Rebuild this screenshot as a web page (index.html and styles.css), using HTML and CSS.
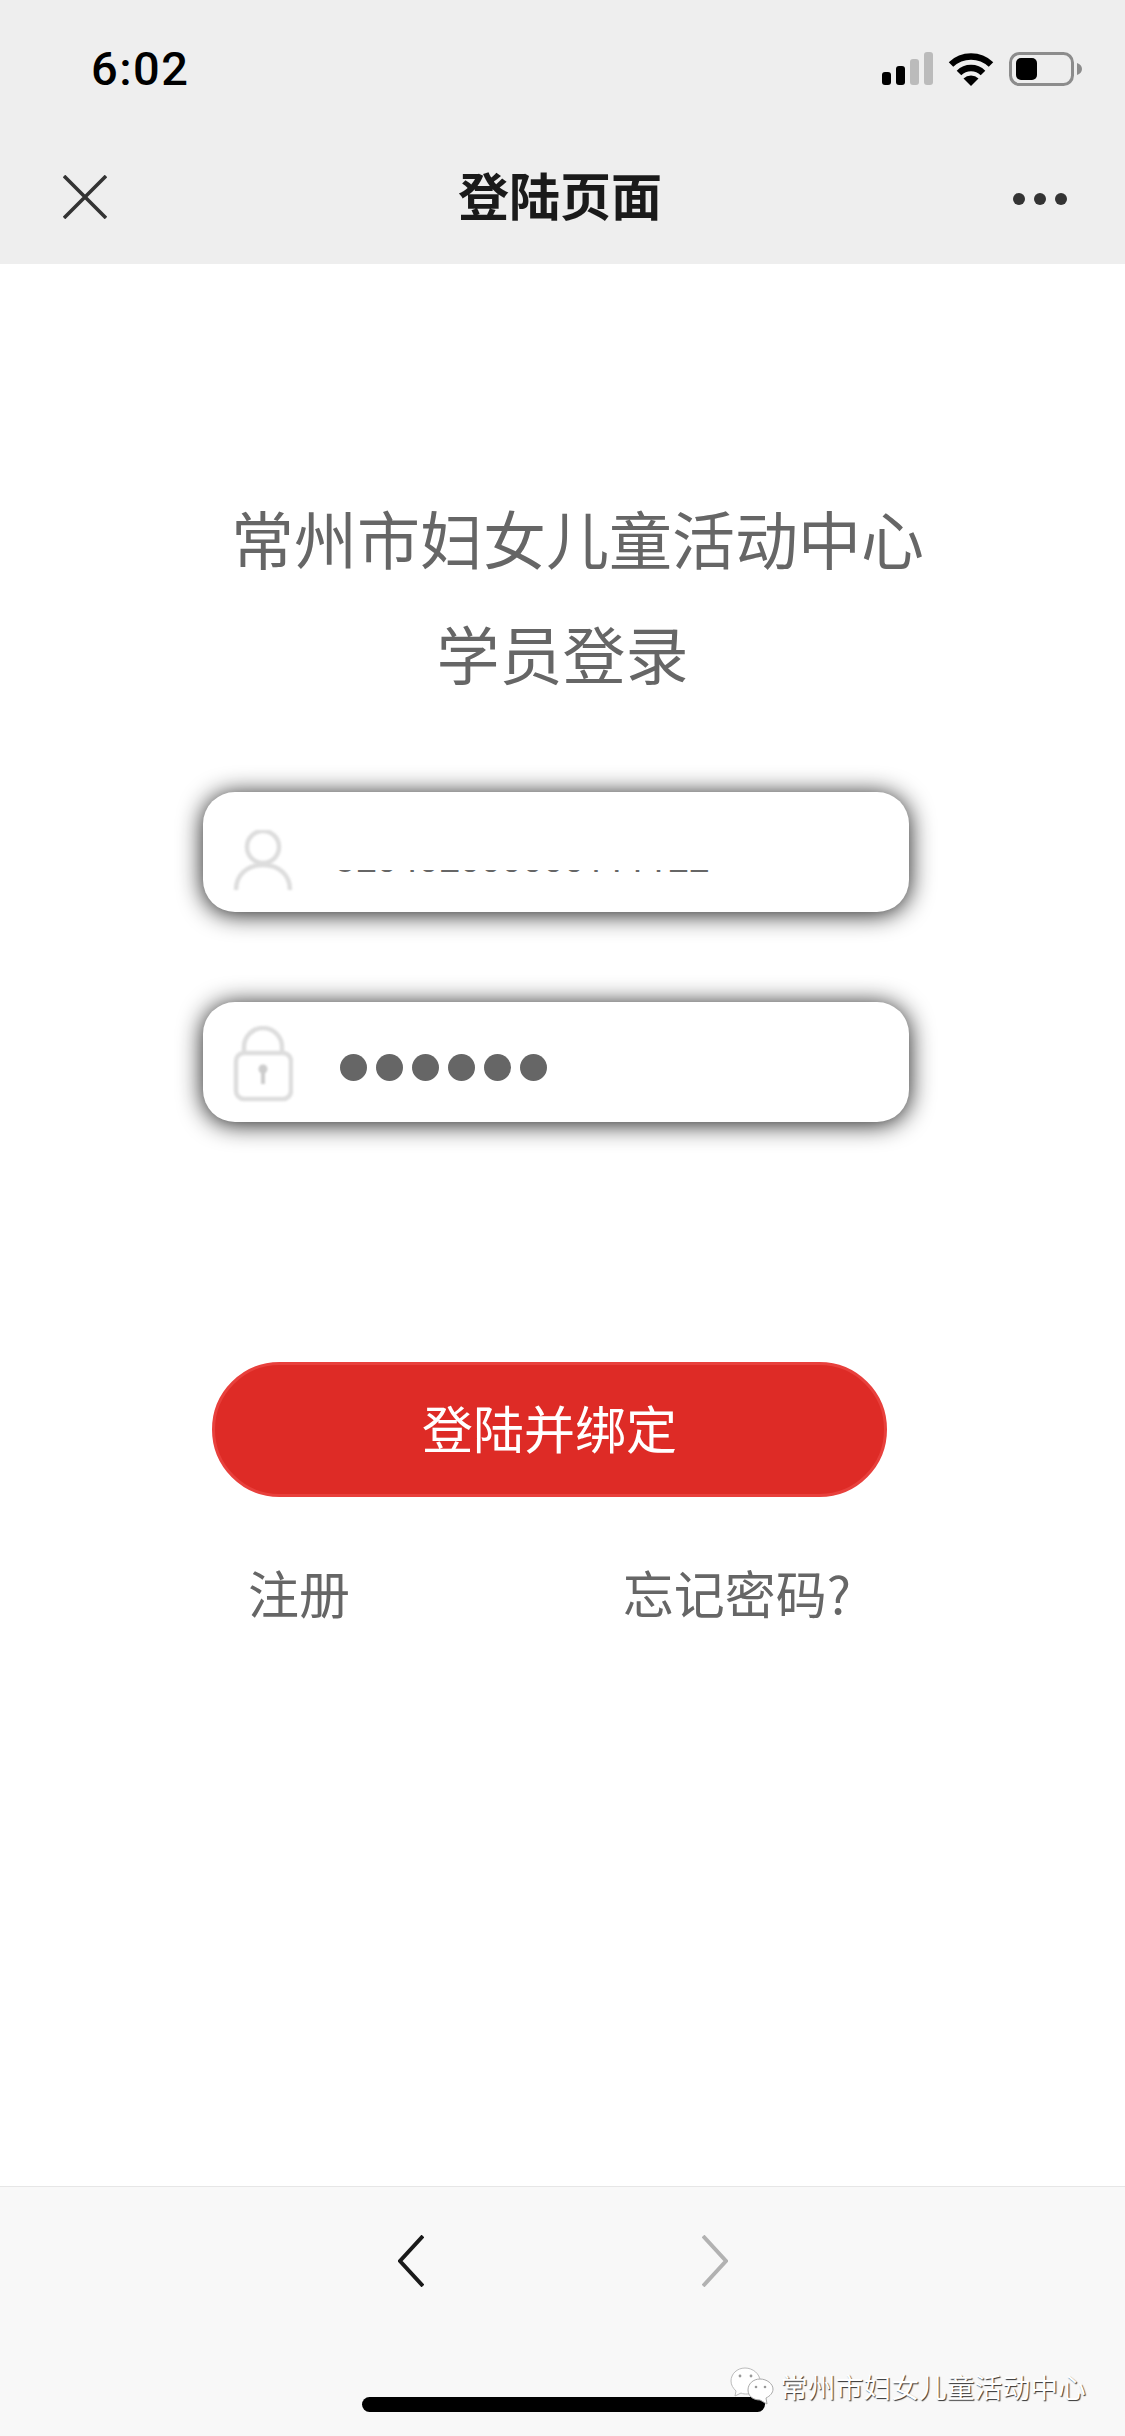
FILE: index.html
```html
<!DOCTYPE html>
<html lang="zh-CN">
<head>
<meta charset="utf-8"/>
<title>登陆页面</title>
<link rel="stylesheet" href="styles.css">
</head>
<body>
<div class="screen">
  <header class="top">
    <div class="status">
      <span class="time">6:02</span>
      <div class="status-icons">
        <svg class="signal" width="51" height="33" viewBox="0 0 51 33">
          <rect x="0" y="20" width="9" height="13" rx="3" fill="#000"/>
          <rect x="14" y="14" width="9" height="19" rx="3" fill="#000"/>
          <rect x="28" y="7" width="9" height="26" rx="3" fill="#bbb"/>
          <rect x="42" y="0" width="9" height="33" rx="3" fill="#bbb"/>
        </svg>
        <svg class="wifi" width="46" height="34" viewBox="0 0 46 34">
          <path d="M3 12.5 A29 29 0 0 1 43 12.5" fill="none" stroke="#000" stroke-width="6.5"/>
          <path d="M11 21 A17 17 0 0 1 35 21" fill="none" stroke="#000" stroke-width="6.5"/>
          <path d="M15.5 26.5 A11 11 0 0 1 30.5 26.5 L23 34 Z" fill="#000"/>
        </svg>
        <svg class="battery" width="73" height="34" viewBox="0 0 73 34">
          <rect x="1.5" y="1.5" width="62" height="31" rx="9" fill="none" stroke="#8c8c8c" stroke-width="3"/>
          <rect x="7" y="6" width="21" height="22" rx="5" fill="#000"/>
          <path d="M68 11 C71 12 73 14 73 17 C73 20 71 22 68 23 Z" fill="#8c8c8c"/>
        </svg>
      </div>
    </div>
    <nav class="nav">
      <svg class="close" width="44" height="44" viewBox="0 0 44 44">
        <path d="M1 1 L43 43 M43 1 L1 43" stroke="#333" stroke-width="3.6" fill="none"/>
      </svg>
      <span class="nav-title">登陆页面</span>
      <div class="more"><i></i><i></i><i></i></div>
    </nav>
  </header>

  <main class="page">
    <h1 class="heading">
      <span class="heading-org">常州市妇女儿童活动中心</span>
      <span class="heading-sub">学员登录</span>
    </h1>

    <div class="field">
      <svg class="field-icon icon-user" width="60" height="60" viewBox="0 0 60 60">
        <circle cx="30" cy="17" r="16" fill="none" stroke="#ddd" stroke-width="4.5"/>
        <path d="M3 60 C3 45 14 35 30 35 C46 35 57 45 57 60" fill="none" stroke="#ddd" stroke-width="4.5"/>
      </svg>
      <div class="id-slice"><span>320402000000111122</span></div>
    </div>

    <div class="field field-pass">
      <svg class="field-icon icon-lock" width="60" height="76" viewBox="0 0 60 76">
        <path d="M11 27 V21 A19 19 0 0 1 49 21 V27" fill="none" stroke="#ddd" stroke-width="4.5"/>
        <rect x="3" y="27" width="55" height="46" rx="8" fill="none" stroke="#ddd" stroke-width="4.5"/>
        <circle cx="30" cy="43" r="4.5" fill="#ccc"/>
        <path d="M30 44 V58" stroke="#ccc" stroke-width="4"/>
      </svg>
      <div class="dots"><i></i><i></i><i></i><i></i><i></i><i></i></div>
    </div>

    <button class="login-btn"><span>登陆并绑定</span></button>

    <div class="links">
      <a>注册</a>
      <a>忘记密码?</a>
    </div>
  </main>

  <footer class="bottom">
    <svg width="26" height="52" viewBox="0 0 26 52">
      <path d="M25 1 L2 26 L25 51" fill="none" stroke="#1a1a1a" stroke-width="4"/>
    </svg>
    <svg width="26" height="52" viewBox="0 0 26 52">
      <path d="M1 1 L24 26 L1 51" fill="none" stroke="#b2b2b2" stroke-width="4"/>
    </svg>
    <div class="home-bar"></div>
    <div class="watermark">
      <svg width="44" height="38" viewBox="0 0 44 38">
        <path d="M15 1 C7 1 1 7 1 14 C1 18 3 21 6 24 L5 29 L11 26 C13 27 15 27 17 27 C25 27 30 21 30 14 C30 7 23 1 15 1 Z" fill="#fff" stroke="#bbb" stroke-width="1"/>
        <path d="M30 12 C23 12 18 17 18 23 C18 29 23 33 30 33 L37 37 L36 31 C40 29 43 26 43 22 C43 17 37 12 30 12 Z" fill="#fff" stroke="#aaa" stroke-width="1"/>
        <circle cx="10" cy="9" r="1.4" fill="#999"/>
        <circle cx="21" cy="9" r="1.4" fill="#999"/>
        <circle cx="26" cy="20" r="1.3" fill="#999"/>
        <circle cx="35" cy="20" r="1.3" fill="#999"/>
      </svg>
      <span>常州市妇女儿童活动中心</span>
    </div>
  </footer>
</div>
</body>
</html>
```

FILE: styles.css
```css
* { box-sizing: border-box; }
body { margin: 0; background: #fff; font-family: "Noto Sans CJK SC", "Noto Sans", sans-serif; }
.screen { width: 1125px; height: 2436px; display: flex; flex-direction: column; overflow: hidden; position: relative; }

/* top bar */
.top { height: 264px; background: #eee; flex-shrink: 0; }
.status { height: 172px; padding: 41px 43px 0 91px; display: flex; justify-content: space-between; align-items: flex-start; }
.time { font-family: "Roboto", "Liberation Sans", sans-serif; font-size: 47px; font-weight: 500; letter-spacing: 1.5px; line-height: 56px; color: #000; }
.status-icons { display: flex; align-items: flex-start; margin-top: 11px; }
.status-icons svg { display: block; }
.signal { margin-right: 15px; }
.wifi { margin-right: 15px; }
.nav { height: 92px; margin-top: -21px; padding: 0 58px 0 63px; display: flex; justify-content: space-between; align-items: center; }
.nav-title { font-size: 51px; font-weight: 700; line-height: 60px; margin-top: -6px; color: #1a1a1a; }
.more { display: flex; gap: 9px; margin-top: 3px; }
.more i { width: 12px; height: 12px; border-radius: 50%; background: #333; }

/* form */
.page { flex: 1; padding-top: 215px; }
.heading { margin: 0 0 83px; font-size: 63px; font-weight: 400; line-height: 115px; color: #666; text-align: center; }
.heading span { display: block; white-space: nowrap; }
.heading-org { padding-left: 30px; }
.field { width: 706px; height: 120px; margin: 0 0 90px 203px; padding-left: 30px; background: #fff; border-radius: 32px; box-shadow: 0 2px 24px rgba(0, 0, 0, .92); display: flex; align-items: center; }
.field-icon { flex-shrink: 0; filter: blur(1px); display: block; }
.icon-user { margin-top: 16px; }
.icon-lock { margin-top: 4px; }
.id-slice { width: 400px; height: 3px; margin: 38px 0 0 42px; overflow: hidden; color: #666; }
.id-slice span { display: block; font-family: "Roboto", sans-serif; font-size: 37px; line-height: 40px; margin-top: -30px; white-space: nowrap; }
.dots { display: flex; gap: 9px; margin: 10px 0 0 47px; }
.dots i { width: 27px; height: 27px; border-radius: 50%; background: #666; }
.field-pass { margin-bottom: 240px; }

.login-btn { display: block; width: 675px; height: 135px; margin-left: 212px; background: #de2b26; border: 3px solid #e8403c; border-radius: 68px; color: #fff; font-family: inherit; font-size: 51px; line-height: 60px; padding: 0 0 6px; }
.links { width: 603px; margin: 65px 0 0 248px; display: flex; justify-content: space-between; font-size: 51px; line-height: 60px; color: #666; }

/* bottom bar */
.bottom { height: 250px; flex-shrink: 0; padding-top: 48px; background: #f8f8f8; border-top: 1px solid #e6e6e6; display: flex; justify-content: center; align-items: flex-start; gap: 278px; position: relative; }
.bottom > svg { display: block; }
.home-bar { position: absolute; left: 362px; top: 210px; width: 403px; height: 15px; border-radius: 8px; background: #000; }
.watermark { position: absolute; left: 730px; top: 180px; display: flex; align-items: center; gap: 6px; font-size: 27.8px; line-height: 38px; color: #fff; text-shadow: 1px 1px 1px rgba(0, 0, 0, .8); white-space: nowrap; }
.watermark svg { display: block; }
```
